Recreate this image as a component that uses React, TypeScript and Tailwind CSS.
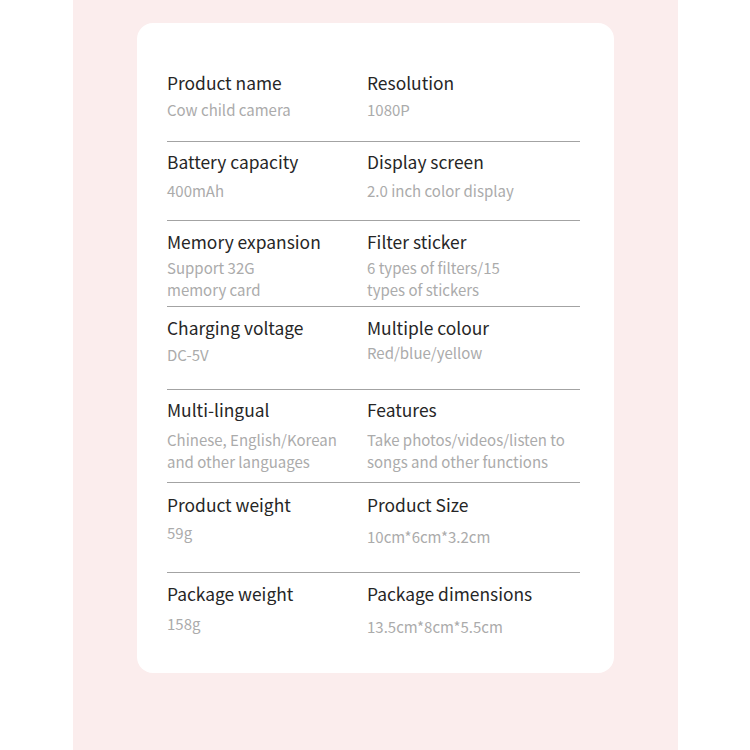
const rows = [
  {
    box: "h-[119px] pt-[48px] border-b border-[#a3a3a3]",
    cells: [
      { label: "Product name", value: ["Cow child camera"], gap: "mt-[4px]" },
      { label: "Resolution", value: ["1080P"], gap: "mt-[4px]" },
    ],
  },
  {
    box: "h-[79px] pt-[8px] border-b border-[#a3a3a3]",
    cells: [
      { label: "Battery capacity", value: ["400mAh"], gap: "mt-[6px]" },
      { label: "Display screen", value: ["2.0 inch color display"], gap: "mt-[6px]" },
    ],
  },
  {
    box: "h-[86px] pt-[9px] border-b border-[#a3a3a3]",
    cells: [
      { label: "Memory expansion", value: ["Support 32G", "memory card"], gap: "mt-[3px]" },
      { label: "Filter sticker", value: ["6 types of filters/15", "types of stickers"], gap: "mt-[3px]" },
    ],
  },
  {
    box: "h-[83px] pt-[9px] border-b border-[#a3a3a3]",
    cells: [
      { label: "Charging voltage", value: ["DC-5V"], gap: "mt-[4px]" },
      { label: "Multiple colour", value: ["Red/blue/yellow"], gap: "mt-[2px]" },
    ],
  },
  {
    box: "h-[93px] pt-[8px] border-b border-[#a3a3a3]",
    cells: [
      { label: "Multi-lingual", value: ["Chinese, English/Korean", "and other languages"], gap: "mt-[7px]" },
      { label: "Features", value: ["Take photos/videos/listen to", "songs and other functions"], gap: "mt-[7px]" },
    ],
  },
  {
    box: "h-[90px] pt-[10px] border-b border-[#a3a3a3]",
    cells: [
      { label: "Product weight", value: ["59g"], gap: "mt-[5px]" },
      { label: "Product Size", value: ["10cm*6cm*3.2cm"], gap: "mt-[9px]" },
    ],
  },
  {
    box: "h-[100px] pt-[9px]",
    cells: [
      { label: "Package weight", value: ["158g"], gap: "mt-[7px]" },
      { label: "Package dimensions", value: ["13.5cm*8cm*5.5cm"], gap: "mt-[10px]" },
    ],
  },
];

export default function App() {
  return (
    <div className="w-[750px] h-[750px] bg-white font-['Noto_Sans_CJK_SC','Noto_Sans',sans-serif]">
      <div className="ml-[73px] w-[605px] h-[750px] bg-[#fbeded] pt-[23px]">
        <div className="ml-[64px] w-[477px] h-[650px] bg-white rounded-[16px] pl-[30px] pr-[34px]">
          {rows.map((row, i) => (
            <div key={i} className={`grid grid-cols-[200px_1fr] ${row.box}`}>
              {row.cells.map((cell) => (
                <div key={cell.label} className="flex flex-col">
                  <div className="text-[17.4px] leading-[24px] text-[#262626]">{cell.label}</div>
                  <div className={`text-[15px] leading-[21.5px] text-[#ababab] ${cell.gap}`}>
                    {cell.value.map((v) => (
                      <div key={v}>{v}</div>
                    ))}
                  </div>
                </div>
              ))}
            </div>
          ))}
        </div>
      </div>
    </div>
  );
}
